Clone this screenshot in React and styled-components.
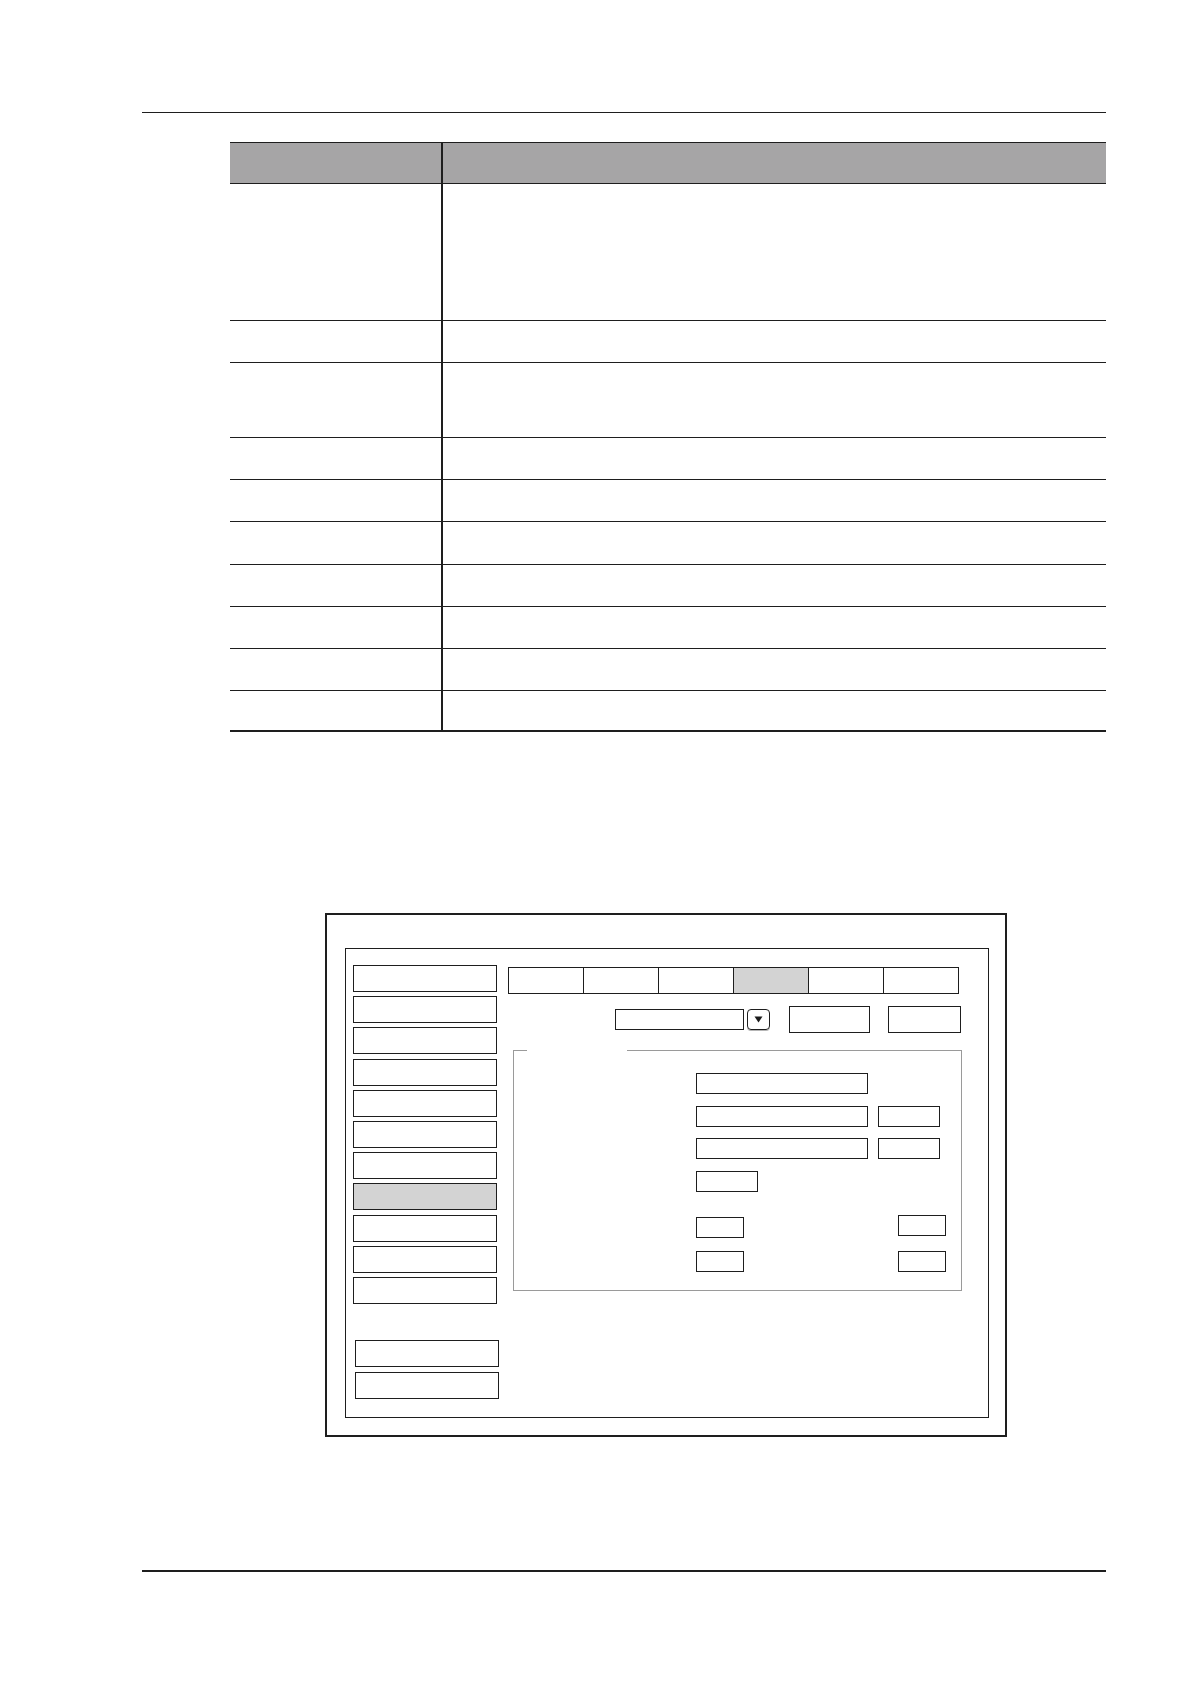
import React from 'react';
import styled, { createGlobalStyle, css } from 'styled-components';

const GlobalStyle = createGlobalStyle`
  html, body {
    margin: 0;
    padding: 0;
    background: #ffffff;
    font-family: 'Liberation Sans', Arial, sans-serif;
  }
  * { box-sizing: border-box; }
`;

const Page = styled.div`
  width: 1191px;
  min-height: 1684px;
  padding: 112px 0 0 142px;
`;

const Rule = styled.div`
  width: 964px;
  border-top: ${p => (p.$thick ? '2px' : '1px')} solid #1e1e1e;
  margin-top: ${p => p.$top || 0}px;
`;

/* ---------- table ---------- */

const Table = styled.div`
  display: grid;
  grid-template-columns: 213px 1fr;
  width: 876px;
  margin: 29px 0 0 88px;
`;

const HeadCell = styled.div`
  height: 42px;
  background: #a6a5a6;
  border-top: 1px solid #1e1e1e;
  border-bottom: 1px solid #1e1e1e;
  ${p => p.$first && css`border-right: 2px solid #1e1e1e;`}
`;

const Cell = styled.div`
  height: ${p => p.$h}px;
  border-bottom: ${p => (p.$last ? '2px' : '1px')} solid #1e1e1e;
  ${p => p.$first && css`border-right: 2px solid #1e1e1e;`}
`;

const rowHeights = [137, 42, 75, 42, 42, 43, 42, 42, 42, 41];

/* ---------- figure ---------- */

const Screen = styled.div`
  width: 682px;
  height: 524px;
  margin: 181px 0 0 183px;
  border: 2px solid #1e1e1e;
  padding: 33px 16px 0 18px;
`;

const Window = styled.div`
  width: 644px;
  height: 470px;
  border: 1px solid #1e1e1e;
  padding: 16px 0 0 7px;
  display: flex;
  align-items: flex-start;
`;

const SideMenu = styled.div`
  width: 146px;
  display: flex;
  flex-direction: column;
`;

const MenuList = styled.div`
  display: flex;
  flex-direction: column;
  gap: 4.2px;
`;

const MenuItem = styled.div`
  width: 144px;
  height: 27px;
  border: 1px solid #1e1e1e;
  background: ${p => (p.$active ? '#d3d3d3' : '#ffffff')};
`;

const MenuFooter = styled.div`
  display: flex;
  flex-direction: column;
  gap: 5px;
  margin: 36px 0 0 2px;
`;

const Main = styled.div`
  margin: 2px 0 0 9px;
  display: flex;
  flex-direction: column;
`;

const Tabs = styled.div`
  display: flex;
  width: 451px;
  height: 27px;
  border: 1px solid #1e1e1e;
`;

const Tab = styled.div`
  flex: 1;
  background: ${p => (p.$active ? '#d3d3d3' : '#ffffff')};
  & + & { border-left: 1px solid #1e1e1e; }
`;

const Toolbar = styled.div`
  display: flex;
  align-items: center;
  height: 27px;
  margin-top: 12px;
  padding-left: 107px;
`;

const Select = styled.div`
  width: 129px;
  height: 21px;
  border: 1px solid #1e1e1e;
`;

const SelectArrow = styled.div`
  width: 23px;
  height: 21px;
  margin-left: 3px;
  border: 1px solid #1e1e1e;
  border-radius: 4px;
  box-shadow: 0 1px 0 #b5b5b5;
  display: flex;
  align-items: center;
  justify-content: center;
`;

const Button = styled.div`
  width: ${p => p.$w}px;
  height: 27px;
  margin-left: ${p => p.$gap}px;
  border: 1px solid #1e1e1e;
`;

const Group = styled.fieldset`
  width: 449px;
  height: 241px;
  margin: 17px 0 0 5px;
  padding: 22px 0 0 0;
  border: 1px solid #9a9a9a;
  min-width: 0;
`;

const GroupTitle = styled.legend`
  width: 100px;
  height: 0;
  padding: 0;
  margin-left: 13px;
  font-size: 0;
  line-height: 0;
`;

const FieldStack = styled.div`
  padding-left: 182px;
  display: flex;
  flex-direction: column;
`;

const FieldRow = styled.div`
  display: flex;
  align-items: flex-start;
  gap: 10px;
  margin-top: ${p => p.$top || 0}px;
  ${p => p.$spread && css`
    width: 250px;
    justify-content: space-between;
  `}
`;

const Field = styled.div`
  width: ${p => p.$w}px;
  height: 21px;
  border: 1px solid #1e1e1e;
  margin-top: ${p => (p.$lift ? -p.$lift : 0)}px;
`;

const Arrow = () => (
  <svg width="9" height="7" viewBox="0 0 9 7">
    <path d="M0.5 0.5 L8.5 0.5 L4.5 6.5 Z" fill="#1a1a1a" />
  </svg>
);

export default function App() {
  return (
    <Page>
      <GlobalStyle />
      <Rule />

      <Table>
        <HeadCell $first />
        <HeadCell />
        {rowHeights.map((h, i) => (
          <React.Fragment key={i}>
            <Cell $first $h={h} $last={i === rowHeights.length - 1} />
            <Cell $h={h} $last={i === rowHeights.length - 1} />
          </React.Fragment>
        ))}
      </Table>

      <Screen>
        <Window>
          <SideMenu>
            <MenuList>
              {Array.from({ length: 11 }).map((_, i) => (
                <MenuItem key={i} $active={i === 7} />
              ))}
            </MenuList>
            <MenuFooter>
              <MenuItem />
              <MenuItem />
            </MenuFooter>
          </SideMenu>

          <Main>
            <Tabs>
              {Array.from({ length: 6 }).map((_, i) => (
                <Tab key={i} $active={i === 3} />
              ))}
            </Tabs>

            <Toolbar>
              <Select />
              <SelectArrow>
                <Arrow />
              </SelectArrow>
              <Button $w={81} $gap={19} />
              <Button $w={73} $gap={18} />
            </Toolbar>

            <Group>
              <GroupTitle />
              <FieldStack>
                <FieldRow>
                  <Field $w={172} />
                </FieldRow>
                <FieldRow $top={12}>
                  <Field $w={172} />
                  <Field $w={62} />
                </FieldRow>
                <FieldRow $top={11}>
                  <Field $w={172} />
                  <Field $w={62} />
                </FieldRow>
                <FieldRow $top={12}>
                  <Field $w={62} />
                </FieldRow>
                <FieldRow $top={25} $spread>
                  <Field $w={48} />
                  <Field $w={48} $lift={2} />
                </FieldRow>
                <FieldRow $top={13} $spread>
                  <Field $w={48} />
                  <Field $w={48} />
                </FieldRow>
              </FieldStack>
            </Group>
          </Main>
        </Window>
      </Screen>

      <Rule $thick $top={133} />
    </Page>
  );
}
